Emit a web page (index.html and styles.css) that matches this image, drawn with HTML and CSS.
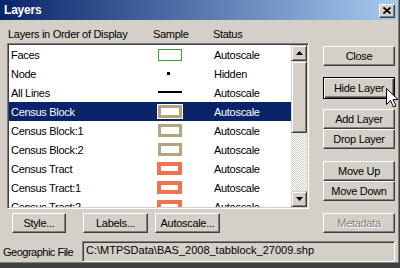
FILE: index.html
```html
<!DOCTYPE html>
<html lang="en">
<head>
  <meta charset="UTF-8" />
  <title>Layers</title>
  <link rel="stylesheet" href="styles.css">
</head>
<body>
  <div class="window">

    <!-- Title bar -->
    <div class="titlebar">
      <span class="title">Layers</span>
      <button class="x-btn">
        <svg width="8" height="7" viewBox="0 0 8 7">
          <path d="M0.5 0.5 L7.5 6.5 M7.5 0.5 L0.5 6.5" stroke="#000" stroke-width="1.8" />
        </svg>
      </button>
    </div>

    <div class="main">
      <div class="left">
        <div class="list-head">
          <span>Layers in Order of Display</span>
          <span>Sample</span>
          <span>Status</span>
        </div>

        <div class="listbox">
          <div class="rows">
            <div class="row"><span class="name">Faces</span><span class="sample"><i class="sw sw-faces"></i></span><span class="status">Autoscale</span></div>
            <div class="row"><span class="name">Node</span><span class="sample"><i class="sw sw-node"></i></span><span class="status">Hidden</span></div>
            <div class="row"><span class="name">All Lines</span><span class="sample"><i class="sw sw-line"></i></span><span class="status">Autoscale</span></div>
            <div class="row selected"><span class="name">Census Block</span><span class="sample"><i class="sw sw-block"></i></span><span class="status">Autoscale</span></div>
            <div class="row"><span class="name">Census Block:1</span><span class="sample"><i class="sw sw-block"></i></span><span class="status">Autoscale</span></div>
            <div class="row"><span class="name">Census Block:2</span><span class="sample"><i class="sw sw-block"></i></span><span class="status">Autoscale</span></div>
            <div class="row"><span class="name">Census Tract</span><span class="sample"><i class="sw sw-tract"></i></span><span class="status">Autoscale</span></div>
            <div class="row"><span class="name">Census Tract:1</span><span class="sample"><i class="sw sw-tract"></i></span><span class="status">Autoscale</span></div>
            <div class="row"><span class="name">Census Tract:2</span><span class="sample"><i class="sw sw-tract"></i></span><span class="status">Autoscale</span></div>
          </div>
          <div class="scrollbar">
            <div class="sb-btn"><svg width="7" height="4" viewBox="0 0 7 4"><path d="M3.5 0 L7 4 L0 4 Z" fill="#000" /></svg></div>
            <div class="sb-thumb"></div>
            <div class="sb-track"></div>
            <div class="sb-btn"><svg width="7" height="4" viewBox="0 0 7 4"><path d="M0 0 L7 0 L3.5 4 Z" fill="#000" /></svg></div>
          </div>
        </div>

        <div class="bottom-btns">
          <button class="btn btn-style">Style...</button>
          <button class="btn btn-labels">Labels...</button>
          <button class="btn btn-auto">Autoscale...</button>
        </div>
      </div>

      <div class="right">
        <button class="btn">Close</button>
        <button class="btn default gap">Hide Layer</button>
        <button class="btn gap">Add Layer</button>
        <button class="btn">Drop Layer</button>
        <button class="btn gap2">Move Up</button>
        <button class="btn">Move Down</button>
        <button class="btn gap2 disabled">Metadata</button>
      </div>
    </div>

    <div class="geo">
      <span class="geo-label">Geographic File</span>
      <div class="field">C:\MTPSData\BAS_2008_tabblock_27009.shp</div>
    </div>

    <!-- mouse pointer over Hide Layer -->
    <svg class="cursor" width="13" height="20" viewBox="0 0 13 20">
      <path d="M0.5 0.5 L0.5 16.5 L4.5 12.5 L7.5 19 L10 18 L7 11.5 L12 11.5 Z" fill="#fff" stroke="#000" stroke-width="1" stroke-linejoin="miter" />
    </svg>
  </div>
</body>
</html>
```

FILE: styles.css
```css
html, body {
  margin: 0;
  padding: 0;
  background: #404040;
}
body {
  font-family: "Liberation Sans", Arial, sans-serif;
  font-size: 11px;
  letter-spacing: -0.3px;
  color: #000;
}
.window {
  position: relative;
  width: 398px;
  height: 262px;
  background: #d4d0c8;
  border-right: 1px solid #808080;
  border-bottom: 1px solid #808080;
  box-shadow: 1px 1px 0 #404040;
  overflow: hidden;
}

/* title bar */
.titlebar {
  height: 20px;
  display: flex;
  align-items: center;
  justify-content: space-between;
  padding: 0 3px 0 4px;
  background: linear-gradient(to right, #0a246a, #a6caf0);
}
.title {
  color: #fff;
  font-weight: bold;
  font-size: 12px;
  letter-spacing: -0.2px;
}
.x-btn {
  width: 16px;
  height: 14px;
  margin-top: 1px;
  padding: 0;
  display: flex;
  align-items: center;
  justify-content: center;
  background: #d4d0c8;
  border: 1px solid;
  border-color: #fff #404040 #404040 #fff;
  box-shadow: inset -1px -1px #808080;
}

.main {
  display: flex;
  gap: 14px;
  padding-left: 7px;
}
.left {
  width: 302px;
}

/* list header */
.list-head {
  height: 23px;
  box-sizing: border-box;
  padding: 8px 0 0 1px;
  line-height: 13px;
  display: grid;
  grid-template-columns: 145px 60px auto;
}

/* list box */
.listbox {
  height: 162px;
  display: flex;
  background: #fff;
  border: 1px solid;
  border-color: #808080 #fff #fff #808080;
  box-shadow: inset 1px 1px #404040, inset -1px -1px #d4d0c8;
  padding: 1px;
  overflow: hidden;
}
.rows {
  flex: 1;
  overflow: hidden;
}
.row {
  height: 19px;
  display: grid;
  grid-template-columns: 148px 25px auto;
  align-items: center;
}
.row .name {
  padding-left: 2px;
}
.row .status {
  padding-left: 32px;
}
.row.selected {
  background: #0a246a;
  color: #fff;
}
.sample {
  display: flex;
  justify-content: center;
}
.sw {
  display: block;
  box-sizing: border-box;
}
.sw-faces {
  width: 24px;
  height: 12px;
  border: 1px solid #3c9e3c;
}
.sw-node {
  width: 3px;
  height: 3px;
  background: #000;
  margin-left: -2px;
}
.sw-line {
  width: 24px;
  height: 2px;
  background: #000;
  margin-top: -2px;
}
.sw-block {
  width: 24px;
  height: 13px;
  border: 3px solid #b4a47c;
  background: #fff;
}
.selected .sw-block {
  outline: 1px solid #fff;
}
.sw-tract {
  width: 25px;
  height: 13px;
  border: 4px solid #f2714f;
  background: #fff;
}

/* scrollbar */
.scrollbar {
  width: 16px;
  display: flex;
  flex-direction: column;
}
.sb-btn, .sb-thumb {
  box-sizing: border-box;
  background: #d4d0c8;
  border: 1px solid;
  border-color: #d4d0c8 #404040 #404040 #d4d0c8;
  box-shadow: inset 1px 1px #fff, inset -1px -1px #808080;
}
.sb-btn {
  height: 16px;
  display: flex;
  align-items: center;
  justify-content: center;
}
.sb-thumb {
  height: 72px;
}
.sb-track {
  flex: 1;
  background: repeating-conic-gradient(#fff 0 25%, #d4d0c8 0 50%) 0 0 / 2px 2px;
}

/* buttons */
.btn {
  display: block;
  box-sizing: border-box;
  height: 20px;
  padding: 0;
  font-family: inherit;
  font-size: 11px;
  letter-spacing: -0.3px;
  color: #000;
  background: #d4d0c8;
  border: 1px solid;
  border-color: #fff #404040 #404040 #fff;
  box-shadow: inset -1px -1px #808080;
}
.bottom-btns {
  display: flex;
  margin-top: 4px;
  padding-left: 5px;
}
.btn-style { width: 54px; }
.btn-labels { width: 65px; margin-left: 17px; }
.btn-auto { width: 65px; margin-left: 7px; }

.right {
  width: 72px;
  padding-top: 26px;
}
.right .btn {
  width: 72px;
}
.right .gap { margin-top: 11px; }
.right .default + .gap { margin-top: 10px; }
.right .gap2 { margin-top: 12px; }
.btn.default {
  height: 22px;
  border: 1px solid #000;
  box-shadow: inset 1px 1px #fff, inset -1px -1px #404040, inset -2px -2px #808080;
}
.btn.disabled {
  color: #808080;
  text-shadow: 1px 1px #fff;
}

/* geographic file row */
.geo {
  display: flex;
  align-items: center;
  margin-top: 8px;
  padding-left: 3px;
}
.geo-label {
  width: 79px;
  letter-spacing: -0.5px;
}
.field {
  box-sizing: border-box;
  width: 313px;
  height: 21px;
  line-height: 17px;
  padding-left: 3px;
  letter-spacing: 0;
  border: 1px solid;
  border-color: #808080 #fff #fff #808080;
  box-shadow: inset 1px 1px #404040, inset -1px -1px #d4d0c8;
  white-space: nowrap;
}

.cursor {
  position: absolute;
  left: 386px;
  top: 88px;
}
```
